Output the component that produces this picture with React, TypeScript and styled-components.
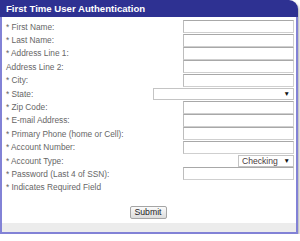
import React from 'react'
import styled, { createGlobalStyle } from 'styled-components'

const GlobalStyle = createGlobalStyle`
  body {
    margin: 0;
    background: #fff;
    font-family: 'Liberation Sans', Arial, sans-serif;
  }
`

type Field = {
  label: string
  kind: 'text' | 'select'
  width?: number
  value?: string
}

const fields: Field[] = [
  { label: '* First Name:', kind: 'text' },
  { label: '* Last Name:', kind: 'text' },
  { label: '* Address Line 1:', kind: 'text' },
  { label: 'Address Line 2:', kind: 'text' },
  { label: '* City:', kind: 'text' },
  { label: '* State:', kind: 'select', width: 141, value: '' },
  { label: '* Zip Code:', kind: 'text' },
  { label: '* E-mail Address:', kind: 'text' },
  { label: '* Primary Phone (home or Cell):', kind: 'text' },
  { label: '* Account Number:', kind: 'text' },
  { label: '* Account Type:', kind: 'select', width: 56, value: 'Checking' },
  { label: '* Password (Last 4 of SSN):', kind: 'text' },
]

const App = () => {
  return (
    <>
      <GlobalStyle />
      <SPanel>
        <SHeader>First Time User Authentication</SHeader>
        <SBody>
          <SForm>
            {fields.map((f) => (
              <SRow key={f.label}>
                <SLabel>{f.label}</SLabel>
                {f.kind === 'text' ? (
                  <STextInput type="text" />
                ) : (
                  <SSelectWrap $width={f.width || 111}>
                    <SSelectValue>{f.value}</SSelectValue>
                    <SArrow>▼</SArrow>
                  </SSelectWrap>
                )}
              </SRow>
            ))}
            <SNote>* Indicates Required Field</SNote>
            <SActions>
              <SButton type="button">Submit</SButton>
            </SActions>
          </SForm>
          <SFooter />
        </SBody>
      </SPanel>
    </>
  )
}

export default App

const SPanel = styled.div`
  width: 298px;
  border-top-right-radius: 9px;
  overflow: hidden;
  box-shadow: 1px 2px 3px rgba(0, 0, 0, 0.35);
  background: #fff;
`

const SHeader = styled.div`
  height: 17px;
  line-height: 17px;
  padding-left: 6px;
  background: #2e3192;
  color: #fff;
  font-size: 9.6px;
  font-weight: bold;
`

const SBody = styled.div`
  border: 2px solid #8282d6;
  border-top: none;
`

const SForm = styled.div`
  padding: 3px 2px 0 4px;
`

const SRow = styled.div`
  display: flex;
  justify-content: space-between;
  align-items: center;
  height: 13.4px;
`

const SLabel = styled.span`
  font-size: 8.3px;
  color: #666;
  white-space: nowrap;
`

const STextInput = styled.input`
  box-sizing: border-box;
  width: 111px;
  height: 13px;
  margin: 0;
  padding: 0 2px;
  border: 1px solid #cfcfcf;
  border-top-color: #a8a8a8;
  border-left-color: #bdbdbd;
  background: #fff;
  outline: none;
`

const SSelectWrap = styled.div<{ $width: number }>`
  position: relative;
  box-sizing: border-box;
  width: ${({ $width }) => $width}px;
  height: 12px;
  border: 1px solid #c4c4c4;
  background: #fff;
  display: flex;
  align-items: center;
  padding-left: 3px;
`

const SSelectValue = styled.span`
  font-size: 8.6px;
  color: #4a3c3c;
`

const SArrow = styled.span`
  position: absolute;
  right: 3px;
  top: 1px;
  font-size: 6.5px;
  color: #111;
`

const SNote = styled.div`
  font-size: 8.3px;
  color: #666;
  height: 10px;
  line-height: 10px;
  margin-top: 1px;
`

const SActions = styled.div`
  display: flex;
  justify-content: center;
  padding: 14px 0 4px;
`

const SButton = styled.button`
  box-sizing: border-box;
  width: 37px;
  height: 13px;
  padding: 0;
  margin-left: -4px;
  font-family: 'Liberation Sans', Arial, sans-serif;
  font-size: 8.7px;
  color: #222;
  background: linear-gradient(#fbfbfb, #dcdcdc);
  border: 1px solid #a5a5a5;
  border-radius: 2px;
`

const SFooter = styled.div`
  height: 9px;
  background: #ececec;
`
